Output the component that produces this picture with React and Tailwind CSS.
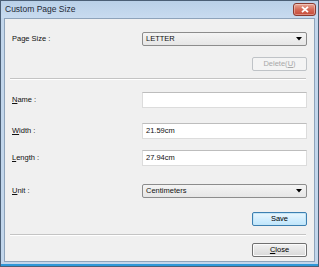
export default function App() {
  const font = { fontFamily: '"Liberation Sans", Arial, sans-serif' }
  return (
    <div className="w-[319px] h-[267px] bg-white" style={font}>
      <div className="w-[319px] h-[267px] flex flex-col border border-[#4b5f76] bg-[#c2d6eb] shadow-[inset_0_-2px_0_#2e98d8]">
        {/* title bar */}
        <div className="h-[17px] flex items-center justify-between pl-[4px] pr-[2px] bg-gradient-to-b from-[#b9d0e8] to-[#c8dbef]">
          <span className="text-[8.5px] text-[#1e2a36] leading-none">Custom Page Size</span>
          <button className="w-[23px] h-[13px] mt-[-1px] rounded-[3px] border border-[#8a3a30] bg-gradient-to-b from-[#e8a898] via-[#d46a58] to-[#c64a38] flex items-center justify-center shadow-[inset_0_0_0_1px_rgba(255,255,255,0.35)]">
            <svg width="8" height="7" viewBox="0 0 8 7">
              <path d="M1 0.8 L7 6.2 M7 0.8 L1 6.2" stroke="#ffffff" strokeWidth="1.8" />
            </svg>
          </button>
        </div>
        {/* body */}
        <div className="flex-1 mx-[3px] mb-[4px] border border-[#8ea3ba] bg-[#f0f0f0] flex flex-col px-[7px] text-[7.5px] text-[#111]">
          <div className="flex items-center mt-[13px]">
            <span className="w-[130px]">Page Size :</span>
            <Combo value="LETTER" />
          </div>
          <div className="flex justify-end mt-[11px]">
            <button className="w-[55px] h-[14px] rounded-[2px] border border-[#bfc3c7] bg-[#f4f4f4] text-[#a8a8a8] leading-none">
              Delete(<span className="underline">U</span>)
            </button>
          </div>
          <Sep className="mt-[7px]" />
          <Field className="mt-[12px]" label={<><span className="underline">N</span>ame :</>} value="" />
          <Field className="mt-[15px]" label={<><span className="underline">W</span>idth :</>} value="21.59cm" />
          <Field className="mt-[11px]" label={<><span className="underline">L</span>ength :</>} value="27.94cm" />
          <div className="flex items-center mt-[18px]">
            <span className="w-[130px]"><span className="underline">U</span>nit :</span>
            <Combo value="Centimeters" />
          </div>
          <div className="flex justify-end mt-[14px]">
            <button className="w-[55px] h-[14px] rounded-[2px] border border-[#3c7fb1] bg-gradient-to-b from-[#eaf6fd] to-[#bee6fd] shadow-[inset_0_0_0_1px_#c4e5f6] leading-none text-black">
              Save
            </button>
          </div>
          <Sep className="mt-[8px]" />
          <div className="flex justify-end mt-[7px]">
            <button className="w-[55px] h-[14px] rounded-[2px] border border-[#707070] bg-gradient-to-b from-[#f2f2f2] to-[#d8d8d8] shadow-[inset_0_0_0_1px_#fbfbfb] leading-none text-black">
              <span className="underline">C</span>lose
            </button>
          </div>
        </div>
      </div>
    </div>
  )
}

function Combo({ value }) {
  return (
    <div className="w-[165px] h-[14px] rounded-[2px] border border-[#8c8c8c] bg-gradient-to-b from-[#f4f4f4] to-[#e6e6e6] flex items-center justify-between pl-[3px] pr-[4px]">
      <span className="leading-none">{value}</span>
      <svg width="6" height="4" viewBox="0 0 6 4">
        <path d="M0 0 H6 L3 3.5 Z" fill="#000" />
      </svg>
    </div>
  )
}

function Field({ label, value, className }) {
  return (
    <div className={`flex items-center ${className}`}>
      <span className="w-[130px]">{label}</span>
      <div className="w-[165px] h-[16px] border border-[#dcdcdc] border-t-[#bdbdbd] bg-white flex items-center px-[3px]">
        <span className="leading-none">{value}</span>
      </div>
    </div>
  )
}

function Sep({ className }) {
  return (
    <div className={`mx-[-2px] w-[296px] h-[2px] border-t border-[#c4c4c4] border-b border-b-white ${className}`} />
  )
}
